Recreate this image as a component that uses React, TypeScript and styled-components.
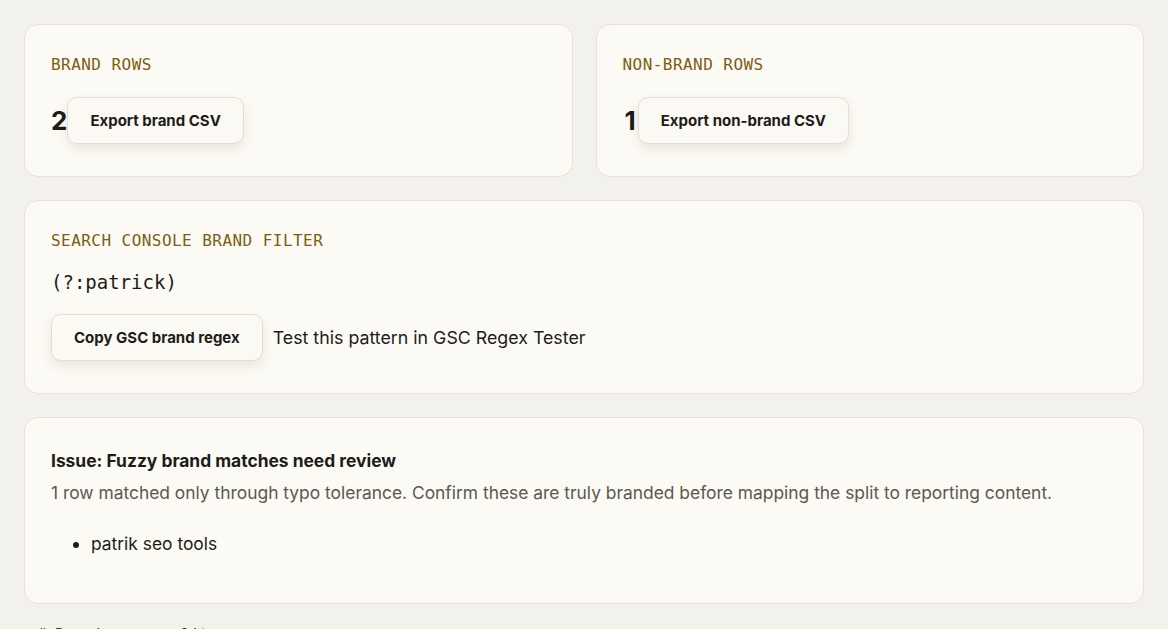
import React from "react";
import styled, { createGlobalStyle } from "styled-components";

const GlobalStyle = createGlobalStyle`
  html, body { margin: 0; padding: 0; }
  body {
    background: #f3f1eb;
    font-family: Inter, "Noto Sans", sans-serif;
    color: #1e1c18;
  }
`;

const Page = styled.div`
  display: flex;
  flex-direction: column;
  gap: 23px;
  padding: 24px 24px 0 24px;
`;

const Row = styled.div`
  display: grid;
  grid-template-columns: 1fr 1fr;
  gap: 23px;
`;

const Card = styled.section`
  background: #fcfaf4;
  border: 1px solid #e6e2d8;
  border-radius: 14px;
  padding: 30px 26px 32px 26px;
  display: flex;
  flex-direction: column;
`;

const Label = styled.div`
  font-family: "DejaVu Sans Mono", "Liberation Mono", monospace;
  font-size: 16px;
  letter-spacing: 0.45px;
  line-height: 20px;
  color: #7c5d12;
  text-transform: uppercase;
`;

const StatRow = styled.div`
  display: flex;
  align-items: center;
  margin-top: 22px;
`;

const StatNumber = styled.span<{ $narrow?: boolean }>`
  font-size: 26px;
  font-weight: 700;
  line-height: 30px;
  color: #1e1c18;
  margin-left: ${(p) => (p.$narrow ? "2px" : "0")};
  margin-right: ${(p) => (p.$narrow ? "2px" : "0")};
`;

const Button = styled.button`
  font-family: Inter, "Noto Sans", sans-serif;
  font-size: 15px;
  font-weight: 700;
  color: #1e1c18;
  background: #fbf9f3;
  border: 1px solid #e2ded4;
  border-radius: 10px;
  height: 47px;
  padding: 0 22px;
  box-shadow: 0 5px 12px rgba(60, 50, 30, 0.1);
  cursor: pointer;
`;

const Regex = styled.div`
  font-family: "DejaVu Sans Mono", "Liberation Mono", monospace;
  font-size: 19px;
  line-height: 24px;
  margin-top: 19px;
  color: #1e1c18;
`;

const ActionRow = styled.div`
  display: flex;
  align-items: center;
  gap: 10px;
  margin-top: 20px;
`;

const Hint = styled.span`
  font-size: 17.8px;
  color: #1e1c18;
`;

const IssueTitle = styled.h3`
  margin: 1px 0 0 0;
  font-size: 17.4px;
  line-height: 24px;
  font-weight: 700;
  color: #1e1c18;
`;

const IssueText = styled.p`
  margin: 8px 0 0 0;
  font-size: 17.4px;
  line-height: 24px;
  color: #5d584e;
`;

const List = styled.ul`
  margin: 27px 0 15px 0;
  padding-left: 40px;
  font-size: 17.4px;
  line-height: 24px;
  color: #1e1c18;
`;

const Footer = styled.div`
  font-family: "DejaVu Sans Mono", "Liberation Mono", monospace;
  font-size: 15px;
  line-height: 20px;
  color: #3a362e;
  padding: 0 13px;
  margin-top: -2px;
`;

export default function App() {
  return (
    <>
      <GlobalStyle />
      <Page>
        <Row>
          <Card>
            <Label>Brand rows</Label>
            <StatRow>
              <StatNumber>2</StatNumber>
              <Button>Export brand CSV</Button>
            </StatRow>
          </Card>
          <Card>
            <Label>Non-brand rows</Label>
            <StatRow>
              <StatNumber $narrow>1</StatNumber>
              <Button>Export non-brand CSV</Button>
            </StatRow>
          </Card>
        </Row>
        <Card>
          <Label>Search Console brand filter</Label>
          <Regex>(?:patrick)</Regex>
          <ActionRow>
            <Button>Copy GSC brand regex</Button>
            <Hint>Test this pattern in GSC Regex Tester</Hint>
          </ActionRow>
        </Card>
        <Card>
          <IssueTitle>Issue: Fuzzy brand matches need review</IssueTitle>
          <IssueText>
            1 row matched only through typo tolerance. Confirm these are truly branded before mapping the split to reporting content.
          </IssueText>
          <List>
            <li>patrik seo tools</li>
          </List>
        </Card>
        <Footer># Brand query split</Footer>
      </Page>
    </>
  );
}
